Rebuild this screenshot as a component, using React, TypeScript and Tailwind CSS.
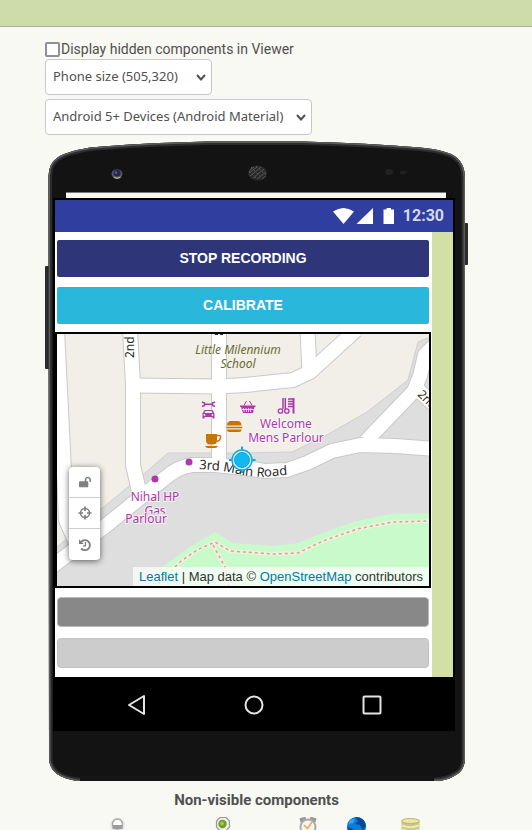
import React from "react";
import { FaLockOpen } from "react-icons/fa";

const sans = "font-['Liberation_Sans',Arial,sans-serif]";

const roads = [
  "M57 330 L63 450 L66 520 L80 552",
  "M130 330 L133 385 L133 465 L141 500",
  "M219 330 V464",
  "M133 385.5 L219 386.5 L245 385 L293 380 L310 372 L356 330",
  "M307.500 330 L309.500 372",
  "M50 568 L104 527 L140 498 L165 478 Q178 467 192 465 L215 465 L245 468 L265 471 L287 470 L307 463 L332 451 L360 445 L395 446 L435 449",
  "M366 441 L414 391 L420 376 L425 355 L437 343",
  "M417 389 L437 407",
];

function PhoneFrame() {
  const body =
    "M48.500 176 Q49 163 57 158 Q64 152 90 147.500 Q140 143 207 141.500 H303 Q367 143 420 147.500 Q447 150 456 157 Q465 164 465 178 L465 760 Q464 771 456 775 Q447 781 435 781 H77 Q64 779 57 774 Q49 768 49 758 Z";
  return (
    <svg
      aria-hidden="true"
      viewBox="45 141 423 640"
      preserveAspectRatio="none"
      className="absolute inset-0 h-full w-full"
    >
      <defs>
        <clipPath id="body-clip">
          <path d={body} />
        </clipPath>
      </defs>
      <rect x="45" y="266" width="5" height="103" rx="1" fill="#2a2a2c" />
      <rect x="463" y="223" width="5" height="42" rx="1" fill="#2e2e30" />
      <path d={body} fill="#131313" />
      <g clipPath="url(#body-clip)" fill="none">
        <path d={body} stroke="#2c2c2e" strokeWidth="7" />
        <path d={body} stroke="#5c5d5f" strokeWidth="3" />
        <path d="M80 782 H434" stroke="#131313" strokeWidth="9" />
      </g>
      <ellipse cx="117" cy="174" rx="5.500" ry="4.800" fill="#55555b" />
      <circle cx="117" cy="173" r="3.500" fill="#25254f" />
      <circle cx="116" cy="172.500" r="1.300" fill="#5a5ab0" />
      <path d="M114 177 Q117 179.500 120.500 177" stroke="#aaa" strokeWidth="1.300" fill="none" />
      <ellipse cx="257.500" cy="173" rx="9.500" ry="7.500" fill="#292929" />
      <g stroke="#555" strokeWidth="1" fill="none">
        <path d="M250 170 l4 -3 M249 173 l8 -6 M250 176 l11 -9 M253 178 l11 -9 M257 179 l9 -7 M262 179 l4 -3" />
        <path d="M251 167 l12 12 M256 166 l10 9 M249 171 l8 8" strokeDasharray="2 2" />
      </g>
      <ellipse cx="389" cy="172" rx="4" ry="3" fill="#222224" />
      <ellipse cx="403" cy="172.500" rx="3" ry="2" fill="#202022" />
      <rect x="66" y="192" width="380" height="7" fill="#f7f8f1" />
      <path d="M66 192.500 H446" stroke="#777" />
    </svg>
  );
}

function StreetMap() {
  return (
    <svg
      role="img"
      aria-label="Street map"
      viewBox="57 334 372 252"
      preserveAspectRatio="xMidYMid slice"
      className="absolute inset-0 h-full w-full font-['Noto_Sans','Open_Sans',sans-serif]"
    >
      <defs>
        <path id="main-road-label" d="M199 469 L220 470.500 L246 475.500 L262 477 L300 474" />
        <clipPath id="gas-clip">
          <rect x="130" y="500" width="50" height="13.500" />
        </clipPath>
      </defs>
      <rect x="57" y="334" width="372" height="252" fill="#f2efe9" />
      <path
        d="M430 337 L418 342 L408 380 L367 412 L325 436 L292 452 L240 453 H168 L145 473 L100 510 L56 548 V587 H430 Z"
        fill="#dedede"
        stroke="#cfcfcf"
      />
      <path
        d="M150 587 L165 565 L193 545 L215 532 L233 543 L273 546 L298 543 L323 533 L353 522 L390 514 L430 513 V587 Z"
        fill="#c8facc"
      />
      <g fill="none" stroke="#e4f6df" strokeWidth="4">
        <path d="M158 584 L180 562 L197 550 L215 542 L230 551 L273 554 L298 553 L323 541 L357 529 L393 522 L430 521" />
        <path d="M213 545 L225 567 L229 587" />
      </g>
      <g fill="none" stroke="#f99484" strokeWidth="1.500" strokeDasharray="3 3">
        <path d="M158 584 L180 562 L197 550 L215 542 L230 551 L273 554 L298 553 L323 541 L357 529 L393 522 L430 521" />
        <path d="M213 545 L225 567 L229 587" />
      </g>
      <g fill="none" stroke="#c9c9c9" strokeWidth="16" strokeLinejoin="round">
        {roads.map((d) => (
          <path key={d} d={d} />
        ))}
      </g>
      <g fill="none" stroke="#fff" strokeWidth="14" strokeLinejoin="round">
        {roads.map((d) => (
          <path key={d} d={d} />
        ))}
      </g>

      <g fill="#2b2b2b">
        <text fontSize="12" transform="translate(134 358) rotate(-90)">2nd</text>
        <text fontSize="12" transform="translate(417 395) rotate(45)">2nd</text>
        <text fontSize="13">
          <textPath href="#main-road-label">3rd Main Road</textPath>
        </text>
        <path d="M215 334 h3 v1 h-3 z M220 334 h3 v1 h-3 z" />
      </g>
      <g fontSize="12" textAnchor="middle" fill="#6b6b30" fontStyle="italic">
        <text x="238" y="354">Little Milennium</text>
        <text x="238" y="368">School</text>
      </g>
      <g
        fontSize="12"
        textAnchor="middle"
        fill="#ac39ac"
        stroke="#fff"
        strokeOpacity="0.600"
        strokeWidth="2"
        paintOrder="stroke"
      >
        <text x="286" y="428">Welcome</text>
        <text x="286" y="442">Mens Parlour</text>
        <text x="155" y="501">Nihal HP</text>
        <text x="155" y="515" clipPath="url(#gas-clip)">Gas</text>
        <text x="146" y="523">Parlour</text>
      </g>

      <g fill="#ac39ac">
        <circle cx="189" cy="462" r="3.500" />
        <circle cx="155" cy="479" r="3.500" />
        <path d="M204.500 410 H212.500 L214.500 413.500 V418.500 H212.500 V417 H204.500 V418.500 H202.500 V413.500 Z" />
        <path d="M205.500 411 H211.500 L212.500 413 H204.500 Z" fill="#f2efe9" />
        <circle cx="204.500" cy="415" r="0.900" fill="#f2efe9" />
        <circle cx="212.500" cy="415" r="0.900" fill="#f2efe9" />
        <path
          d="M202 402 L204.500 403 V405.500 L202 406.500 M215 402 L212.500 403 V405.500 L215 406.500 M204.500 404.300 H212.500"
          fill="none"
          stroke="#ac39ac"
          strokeWidth="1.500"
        />
        <path d="M240 405.500 H255.500 V407 H254.500 L253 413 H243 L241 407 H240 Z" />
        <path
          d="M244 405.500 L246.500 401 M252 405.500 L249.500 401"
          stroke="#ac39ac"
          strokeWidth="1"
        />
        <path
          d="M243.500 408 l.8 4 M246 408 l.5 4 M248.500 408 v4 M251 408 l-.5 4 M242 409.500 H254"
          stroke="#f2efe9"
          strokeWidth="0.800"
        />
        <path d="M292.500 398 H294.500 V413.500 H292.500 Z" />
        <path
          d="M288 399 H293 M288 401.500 H293 M288 404 H293 M288 406.500 H293"
          stroke="#ac39ac"
          strokeWidth="1.400"
        />
        <path
          d="M283 398 V409 M285.300 398 V409"
          stroke="#ac39ac"
          strokeWidth="1.500"
        />
        <circle cx="280.500" cy="411" r="2.200" fill="none" stroke="#ac39ac" strokeWidth="1.300" />
        <circle cx="286.800" cy="411" r="2.200" fill="none" stroke="#ac39ac" strokeWidth="1.300" />
      </g>
      <g fill="#c77400">
        <path d="M227 425.500 Q227 421 231 421 H237.500 Q241.500 421 241.500 425.500 Z M226.500 426.800 H242.300 V428.300 H226.500 Z M227 429.500 H241.500 V430 Q241.500 432 239 432 H229.500 Q227 432 227 430 Z" />
        <path d="M206 434 H217 V440 Q217 444.500 213 444.500 H210 Q206 444.500 206 440 Z M205 446 H218 Q217 448 215 448 H208 Q206 448 205 446 Z" />
        <path
          d="M217 435.500 H219 Q221 435.500 220.500 438 Q220 441 216.500 441.500"
          fill="none"
          stroke="#c77400"
          strokeWidth="1.500"
        />
      </g>
      <g>
        <path d="M242 446.500 V473 M229 460 H255.500" stroke="#00aee6" strokeWidth="2" />
        <circle cx="242" cy="460" r="10" fill="#d8f3fb" stroke="#13aee0" strokeWidth="1.500" />
        <circle cx="242" cy="460" r="7.500" fill="#12b9ee" stroke="#2a93e8" strokeWidth="1" />
      </g>
    </svg>
  );
}

function MapPanel() {
  const button =
    "flex h-[31px] w-[31px] items-center justify-center text-[12px] text-[#808080]";
  return (
    <section
      aria-label="Map"
      className={`relative mr-px flex h-64 items-end justify-end overflow-hidden border-2 border-black ${sans}`}
    >
      <StreetMap />
      <div className="absolute bottom-[26px] left-3 flex flex-col divide-y divide-[#ccc] rounded-sm bg-white shadow-[0_1px_6px_rgba(0,0,0,0.6)]">
        <button type="button" aria-label="Unlock map" className={button}>
          <FaLockOpen />
        </button>
        <button type="button" aria-label="Center map" className={button}>
          <svg width="14" height="14" viewBox="0 0 14 14" fill="none" stroke="currentColor">
            <circle cx="7" cy="7" r="4.500" strokeWidth="1.500" />
            <path d="M7 0.500 V5 M7 9 V13.500 M0.500 7 H5 M9 7 H13.500" strokeWidth="1.700" />
          </svg>
        </button>
        <button type="button" aria-label="Reset map" className={button}>
          <svg width="14" height="14" viewBox="0 0 14 14" fill="none" stroke="currentColor">
            <path d="M2.800 4.300 A5 5 0 1 1 3.200 10.500" strokeWidth="1.900" />
            <path d="M1 1.200 V6 H5.800 Z" fill="currentColor" stroke="none" />
            <path d="M7.500 4 V7.800 H5" strokeWidth="1.300" />
          </svg>
        </button>
      </div>
      <p className="relative bg-white/70 px-1.5 text-[13px] leading-[19px] whitespace-nowrap text-[#333]">
        <a href="#leaflet" className="text-[#0078a8]">Leaflet</a> | Map data ©{" "}
        <a href="#osm" className="text-[#0078a8]">OpenStreetMap</a> contributors
      </p>
    </section>
  );
}

function StatusBar() {
  return (
    <div className="flex h-8 items-center justify-end bg-[#303f9f] pr-[9px]">
      <svg aria-hidden="true" width="62" height="18" viewBox="332 205 62 18" fill="#fff">
        <path d="M332 209.500 Q342.500 202.500 353 209.500 L342.500 222 Z" />
        <path d="M372 206 V222 H355.500 Z" />
        <path d="M382.500 207.500 H385.500 V206 H390 V207.500 H393 V222 H382.500 Z" />
      </svg>
      <span className="ml-2 font-[Roboto,sans-serif] text-[16px] leading-5 font-bold text-[#d6d9ec]">
        12:30
      </span>
    </div>
  );
}

function NavBar() {
  const button = "flex h-8 w-8 items-center justify-center";
  return (
    <nav
      aria-label="Device navigation"
      className="mx-[-2px] flex h-[54px] items-center justify-between bg-black px-[67px] pt-0.5"
    >
      <button type="button" aria-label="Back" className={button}>
        <svg width="22" height="22" viewBox="0 0 22 22" fill="none" stroke="#e4e4e4" strokeWidth="2">
          <path d="M19 2 V20 L4 11 Z" strokeLinejoin="round" />
        </svg>
      </button>
      <button type="button" aria-label="Home" className={button}>
        <svg width="22" height="22" viewBox="0 0 22 22" fill="none" stroke="#e4e4e4" strokeWidth="2">
          <circle cx="11" cy="11" r="8.500" />
        </svg>
      </button>
      <button type="button" aria-label="Recent apps" className={button}>
        <svg width="22" height="22" viewBox="0 0 22 22" fill="none" stroke="#e4e4e4" strokeWidth="2">
          <rect x="2.500" y="2.500" width="17" height="17" rx="1" />
        </svg>
      </button>
    </nav>
  );
}

function Phone() {
  const button = `h-[37px] w-full rounded-xs text-[14px] font-bold text-white ${sans}`;
  return (
    <div className="relative mt-1.5 w-full max-w-[423px] pt-[57px] pr-[13px] pb-[50px] pl-2">
      <PhoneFrame />
      <div className="relative border-x-2 border-t-2 border-black">
        <StatusBar />
        <div className="flex bg-white">
          <div className="min-w-0 flex-1">
            <div className="flex flex-col gap-2.5 pt-2 pr-[3px] pb-2 pl-0.5">
              <button type="button" className={`${button} bg-[#2e3579]`}>
                STOP RECORDING
              </button>
              <button type="button" className={`${button} bg-[#29b8dc]`}>
                CALIBRATE
              </button>
            </div>
            <MapPanel />
            <div className="flex flex-col gap-[11px] pt-[9px] pr-[3px] pb-[9px] pl-0.5">
              <input
                aria-label="First field"
                className="h-[30px] w-full rounded-sm border border-[#bbb] bg-[#888] px-2 text-sm"
              />
              <input
                aria-label="Second field"
                className="h-[30px] w-full rounded-sm border border-[#c2c2c2] bg-[#ccc] px-2 text-sm"
              />
            </div>
          </div>
          <div className="w-[21px] bg-[#d2e0a6]" />
        </div>
        <NavBar />
      </div>
    </div>
  );
}

function Picker({ label, value, width }: { label: string; value: string; width: string }) {
  return (
    <div className={`relative ${width}`}>
      <select
        aria-label={label}
        className="h-9 w-full appearance-none rounded-sm border border-[#c8c8c8] bg-white pr-6 pl-[7px] font-['Noto_Sans','Open_Sans',sans-serif] text-[13px] text-[#505050]"
      >
        <option>{value}</option>
      </select>
      <svg
        aria-hidden="true"
        viewBox="0 0 10 7"
        className="pointer-events-none absolute top-[15px] right-1.5 h-[7px] w-2.5"
        fill="none"
        stroke="#505050"
        strokeWidth="2"
      >
        <path d="M1 1 L5 5.500 L9 1" />
      </svg>
    </div>
  );
}

function Components() {
  return (
    <section className="w-full max-w-[423px] pt-2.5">
      <h2 className="text-center text-[15px] leading-[18px] font-bold text-[#505050]">
        Non-visible components
      </h2>
      <svg
        role="img"
        aria-label="Clock, sensor, web and storage components"
        viewBox="108 817 313 18"
        className="mt-2 ml-[63px] h-[18px] w-[313px]"
      >
        <circle cx="117.500" cy="825" r="7.500" fill="#e6e6e4" />
        <circle cx="117.500" cy="824" r="5" fill="#fff" stroke="#aaa" strokeWidth="1.500" />
        <path d="M112.500 825 H122.500 V829 H112.500 Z" fill="#9c9c9c" />
        <path
          d="M220 817.500 H226 L229.500 821 V827 L226 831 H220 L216.500 827 V821 Z"
          fill="#eee"
          stroke="#999"
          strokeWidth="1.200"
        />
        <circle cx="222.500" cy="824" r="4.200" fill="#719d20" />
        <circle cx="222" cy="823.500" r="2" fill="#a1cb46" />
        <path
          d="M300 820.500 L306 818.500 M316 820.500 L310 818.500"
          stroke="#999"
          strokeWidth="4"
        />
        <circle cx="308" cy="827" r="7.500" fill="#f4f4f2" stroke="#aaa" strokeWidth="1.800" />
        <path d="M304 825 L307.500 828.500 L312 822" stroke="#f0a94e" strokeWidth="1.600" fill="none" />
        <circle cx="356.500" cy="826.500" r="9.500" fill="#087de0" />
        <path
          d="M355 817 Q365 817 366 826 L363 830 L360 825 L355 824 L358 821 Z M347 827 L353 829 L355 835 H350 Z"
          fill="#054a92"
        />
        <path d="M350 820 L355 819 L353 823 L349 824 Z" fill="#41a6ef" />
        <path d="M401.500 821 V834 H419.500 V821 Z" fill="#c9c786" />
        <ellipse cx="410.500" cy="821" rx="9" ry="2.500" fill="#ece6a6" stroke="#b9b67a" />
        <path d="M402 825.500 Q410.500 829 419 825.500 M402 829.500 Q410.500 833 419 829.500" stroke="#f0eba8" strokeWidth="2" fill="none" />
      </svg>
    </section>
  );
}

export default function App() {
  return (
    <div className="h-screen overflow-hidden bg-[#f8f9f2] font-[Roboto,sans-serif]">
      <header className="h-[27px] border-b border-[#aaa] bg-[#cddca9]" />
      <main className="pt-[13px] pr-4 pl-[45px]">
        <label className="flex h-[19px] items-center text-[14px] text-[#505050]">
          <input
            type="checkbox"
            className="mr-px h-[15px] w-[15px] appearance-none rounded-xs border-2 border-[#8f8f9d] bg-white"
          />
          Display hidden components in Viewer
        </label>
        <div className="flex flex-col gap-1">
          <Picker label="Screen size" value="Phone size (505,320)" width="w-[167px]" />
          <Picker
            label="Device theme"
            value="Android 5+ Devices (Android Material)"
            width="w-[267px]"
          />
        </div>
        <Phone />
        <Components />
      </main>
    </div>
  );
}
